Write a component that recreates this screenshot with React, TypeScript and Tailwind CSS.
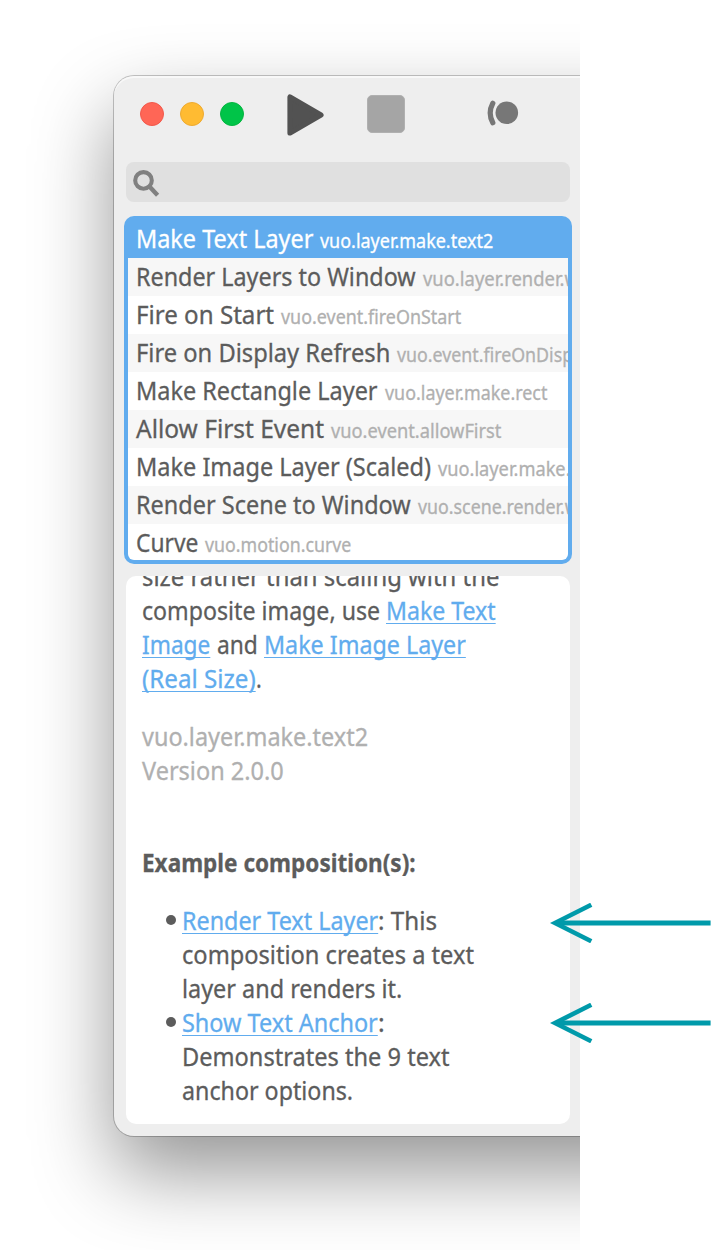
import { useLayoutEffect, useRef, type ReactNode } from "react";

/** A run of text, condensed or widened to take up exactly `w` pixels. */
function Fit({ w, className = "", children }: { w: number; className?: string; children: ReactNode }) {
  const inner = useRef<HTMLSpanElement>(null);
  useLayoutEffect(() => {
    const el = inner.current;
    if (el) el.style.transform = `scaleX(${w / el.offsetWidth})`;
  }, [w]);
  return (
    <span className="inline-block whitespace-nowrap" style={{ width: w }}>
      <span ref={inner} className={`inline-block origin-left ${className}`}>
        {children}
      </span>
    </span>
  );
}

function Link({ w, children }: { w: number; children: ReactNode }) {
  return (
    <Fit
      w={w}
      className="text-[#61acee] underline decoration-1 underline-offset-[3px] [text-decoration-skip-ink:none]"
    >
      {children}
    </Fit>
  );
}

const nodes: { title: string; tw: number; id: string; iw: number }[] = [
  { title: "Make Text Layer", tw: 177, id: "vuo.layer.make.text2", iw: 173 },
  { title: "Render Layers to Window", tw: 280, id: "vuo.layer.render.window2", iw: 219 },
  { title: "Fire on Start", tw: 138, id: "vuo.event.fireOnStart", iw: 180 },
  { title: "Fire on Display Refresh", tw: 254, id: "vuo.event.fireOnDisplayRefresh", iw: 264 },
  { title: "Make Rectangle Layer", tw: 242, id: "vuo.layer.make.rect", iw: 162 },
  { title: "Allow First Event", tw: 188, id: "vuo.event.allowFirst", iw: 170 },
  { title: "Make Image Layer (Scaled)", tw: 295, id: "vuo.layer.make.image", iw: 186 },
  { title: "Render Scene to Window", tw: 275, id: "vuo.scene.render.window2", iw: 222 },
  { title: "Curve", tw: 62, id: "vuo.motion.curve", iw: 146 },
];

function Toolbar() {
  return (
    <div className="flex h-[76px] items-center pl-[26px]">
      <div className="flex gap-4">
        <span className="size-6 rounded-full border border-[#f2584b] bg-[#ff6656]" />
        <span className="size-6 rounded-full border border-[#eeaa30] bg-[#ffbb32]" />
        <span className="size-6 rounded-full border border-[#04b540] bg-[#00c448]" />
      </div>
      <svg className="mt-px ml-[43px] h-[42px] w-[37px]" viewBox="0 0 37 42">
        <path d="M3 3V39L34 21Z" fill="#525252" stroke="#525252" strokeWidth="5.2" strokeLinejoin="round" />
      </svg>
      <span className="ml-[43px] size-[38px] rounded-[5px] border border-[#b0b0b0] bg-[#a5a5a5]" />
      <svg className="mb-[3px] ml-[80px] h-[26px] w-[34px]" viewBox="0 0 34 26" fill="none">
        <path d="M7.8 3.2Q2.6 13 7.8 22.8" stroke="#777" strokeWidth="5.2" strokeLinecap="round" />
        <circle cx="21.8" cy="12.8" r="11.3" fill="#777" stroke="#eeeeee" strokeWidth="0" />
      </svg>
    </div>
  );
}

function Arrow() {
  return (
    <svg className="block h-10 w-[162px]" viewBox="0 0 162 40" fill="none" stroke="#009aaa">
      <path d="M6 20H160.6" strokeWidth="5" />
      <path d="M41.3 1.8L5 20L41.3 38.2" strokeWidth="4.6" />
    </svg>
  );
}

export default function App() {
  return (
    <div className="relative h-[1250px] w-[720px] overflow-hidden bg-white font-['Noto_Sans',sans-serif] text-[25px] text-[#5c5c5c]">
      <div className="h-full w-[580px] overflow-hidden pt-[76px] pl-[114px]">
        <div className="h-[1060px] w-[600px] rounded-[20px] bg-[#eeeeee] pl-3 shadow-[0_0_0_1px_rgba(0,0,0,0.22),0_36px_80px_rgba(0,0,0,0.42),inset_0_2px_0_rgba(255,255,255,0.6)]">
          <div className="-ml-3">
            <Toolbar />
          </div>

          <div className="mt-[10px] flex h-10 w-[444px] rounded-[8px] bg-[#e0e0e0]">
            <svg className="mt-2 ml-[7px] size-7" viewBox="0 0 28 28" fill="none" stroke="#808080">
              <circle cx="10.5" cy="10.4" r="8.3" strokeWidth="4.1" />
              <path d="M16 16L24.6 25.2" strokeWidth="4.4" />
            </svg>
          </div>

          <div className="mt-[14px] -ml-0.5 h-[348px] w-[448px] rounded-[10px] bg-[#61acee] p-1">
            <div className="h-[340px] overflow-hidden rounded-b-[6px]">
              {nodes.map((n, i) => (
                <div
                  key={n.title}
                  className={`h-[38px] overflow-hidden pl-2 leading-[36px] whitespace-nowrap ${
                    i === 0 ? "bg-[#61acee] text-white" : i % 2 ? "bg-[#f7f7f7]" : "bg-white"
                  }`}
                >
                  <Fit w={n.tw} className="[-webkit-text-stroke:0.3px]">
                    {n.title}
                  </Fit>
                  <span className={`ml-[6.5px] text-[19px] ${i === 0 ? "text-white" : "text-[#b0b0b0]"}`}>
                    <Fit w={n.iw} className="[-webkit-text-stroke:0.3px]">
                      {n.id}
                    </Fit>
                  </span>
                </div>
              ))}
            </div>
          </div>

          <div className="mt-3 h-[548px] w-[444px] overflow-hidden rounded-[10px] bg-white px-4 leading-[34px] [-webkit-text-stroke:0.3px]">
            <div className="-mt-[17px]">
              <div className="h-[34px]">
                <Fit w={357}>size rather than scaling with the</Fit>
              </div>
              <div className="h-[34px]">
                <Fit w={238}>composite image, use</Fit>
                <span className="inline-block w-[6px]" />
                <Link w={110}>Make Text</Link>
              </div>
              <div className="h-[34px]">
                <Link w={68}>Image</Link>
                <span className="inline-block w-[7px]" />
                <Fit w={41}>and</Fit>
                <span className="inline-block w-[6px]" />
                <Link w={202}>Make Image Layer</Link>
              </div>
              <div className="h-[34px]">
                <Link w={114}>(Real Size)</Link>
                <Fit w={6}>.</Fit>
              </div>
            </div>
            <div className="mt-6 text-[#b0b0b0]">
              <div className="h-[34px]">
                <Fit w={226}>vuo.layer.make.text2</Fit>
              </div>
              <div className="h-[34px]">
                <Fit w={142}>Version 2.0.0</Fit>
              </div>
            </div>
            <div className="mt-[58px] h-[34px] font-bold">
              <Fit w={274}>Example composition(s):</Fit>
            </div>
            <ul className="mt-6">
              <li className="flex">
                <span className="mt-3 ml-6 size-[10px] rounded-full bg-[#5c5c5c]" />
                <div className="ml-[6px]">
                  <div className="h-[34px]">
                    <Link w={196}>Render Text Layer</Link>
                    <Fit w={59}>: This</Fit>
                  </div>
                  <div className="h-[34px]">
                    <Fit w={292}>composition creates a text</Fit>
                  </div>
                  <div className="h-[34px]">
                    <Fit w={220}>layer and renders it.</Fit>
                  </div>
                </div>
              </li>
              <li className="flex">
                <span className="mt-3 ml-6 size-[10px] rounded-full bg-[#5c5c5c]" />
                <div className="ml-[6px]">
                  <div className="h-[34px]">
                    <Link w={196}>Show Text Anchor</Link>
                    <Fit w={7}>:</Fit>
                  </div>
                  <div className="h-[34px]">
                    <Fit w={268}>Demonstrates the 9 text</Fit>
                  </div>
                  <div className="h-[34px]">
                    <Fit w={171}>anchor options.</Fit>
                  </div>
                </div>
              </li>
            </ul>
          </div>
        </div>
      </div>

      <div className="absolute top-[903px] left-[550px] flex flex-col gap-[60px]">
        <Arrow />
        <Arrow />
      </div>
    </div>
  );
}
